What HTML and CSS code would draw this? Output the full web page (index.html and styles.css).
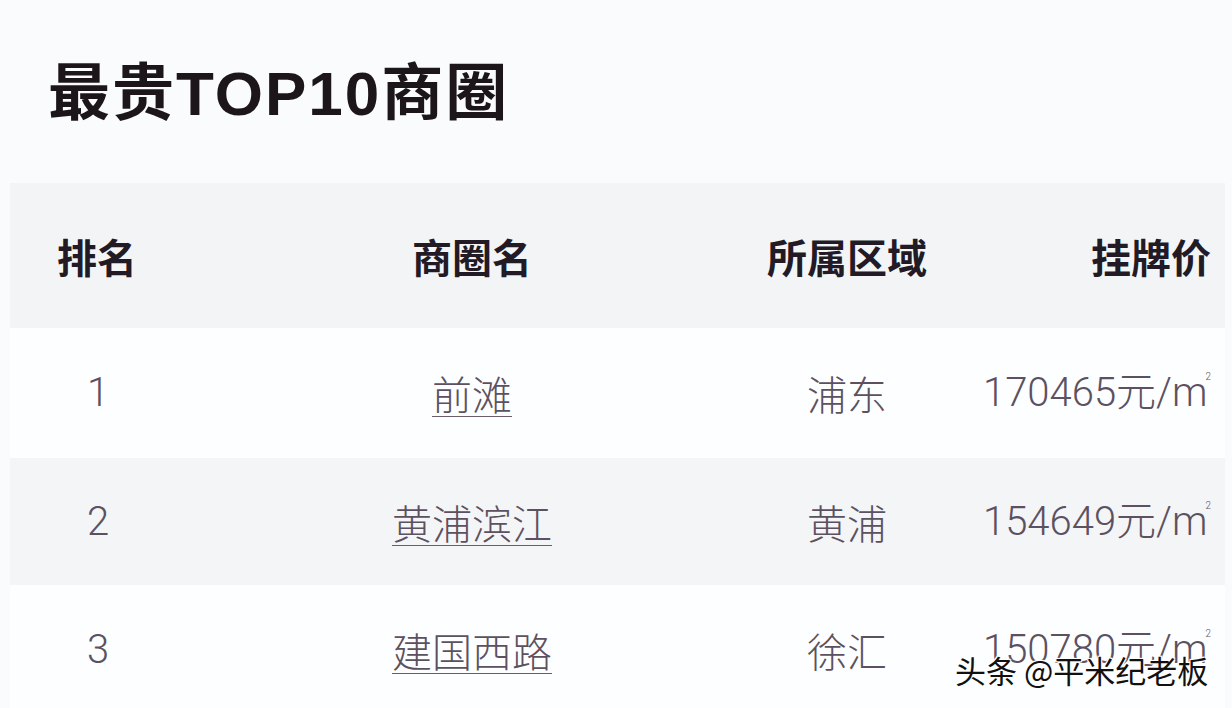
FILE: index.html
```html
<!DOCTYPE html>
<html lang="zh-CN">
<head>
<meta charset="utf-8">
<title>最贵TOP10商圈</title>
<link rel="stylesheet" href="styles.css">
</head>
<body>
<div class="page">
  <h1 class="title">最贵TOP10商圈</h1>
  <div class="table">
    <div class="row head">
      <div class="c1">排名</div>
      <div class="c2">商圈名</div>
      <div class="c3">所属区域</div>
      <div class="c4">挂牌价</div>
    </div>
    <div class="row odd">
      <div class="c1 num">1</div>
      <div class="c2"><span class="link">前滩</span></div>
      <div class="c3">浦东</div>
      <div class="c4 num">170465元/m<sup>2</sup></div>
    </div>
    <div class="row even">
      <div class="c1 num">2</div>
      <div class="c2"><span class="link">黄浦滨江</span></div>
      <div class="c3">黄浦</div>
      <div class="c4 num">154649元/m<sup>2</sup></div>
    </div>
    <div class="row odd last">
      <div class="c1 num">3</div>
      <div class="c2"><span class="link">建国西路</span></div>
      <div class="c3">徐汇</div>
      <div class="c4 num">150780元/m<sup>2</sup></div>
    </div>
  </div>
  <div class="watermark">头条 @平米纪老板</div>
</div>
</body>
</html>
```

FILE: styles.css
```css
html, body {
  margin: 0;
  padding: 0;
  background: #fafbfc;
}
.page {
  position: relative;
  width: 1232px;
  height: 708px;
  overflow: hidden;
  font-family: "Noto Sans CJK SC", sans-serif;
}
.title {
  margin: 0;
  padding: 57px 0 0 48px;
  height: 74px;
  margin-bottom: 52px;
  font-family: "Liberation Sans", "Noto Sans CJK SC", sans-serif;
  font-weight: 700;
  font-size: 62px;
  line-height: 74px;
  letter-spacing: 2px;
  color: #1c1519;
}
.table {
  margin-left: 10px;
  width: 1215px;
}
.row {
  display: grid;
  grid-template-columns: 172px 580px 170px 1fr;
  align-items: center;
  font-size: 40px;
  line-height: 50px;
  height: 130px;
}
.row.head {
  height: 145px;
  background: #f3f4f6;
  font-weight: 700;
  color: #221a25;
}
.row.odd {
  background: #fdfeff;
  height: 130px;
}
.row.even {
  background: #f4f5f7;
  height: 127px;
}
.row.odd, .row.even {
  font-weight: 300;
  color: #5c5160;
}
.c1, .c2, .c3 {
  text-align: center;
}
.c4 {
  text-align: right;
  padding-right: 14px;
}
.num {
  font-family: "Roboto", "Noto Sans CJK SC", sans-serif;
  font-weight: 300;
}
.row.head .c1 {
  text-align: left;
  padding-left: 47px;
}
.row.odd .c1.num, .row.even .c1.num {
  text-align: left;
  padding-left: 77px;
}
.link {
  text-decoration: underline;
  text-decoration-thickness: 1px;
  text-underline-offset: 6px;
  text-decoration-color: #6a5d6e;
}
sup {
  font-size: 10px;
  vertical-align: top;
  line-height: 10px;
  position: relative;
  top: 4px;
  margin-left: -2px;
}
.watermark {
  position: absolute;
  left: 955px;
  top: 650px;
  font-size: 31px;
  line-height: 40px;
  color: #111;
  font-weight: 400;
  text-shadow: 1px 1px 0 #fff, -1px -1px 0 #fff, 1px -1px 0 #fff, -1px 1px 0 #fff, 0 0 3px #fff;
  white-space: nowrap;
}
```
